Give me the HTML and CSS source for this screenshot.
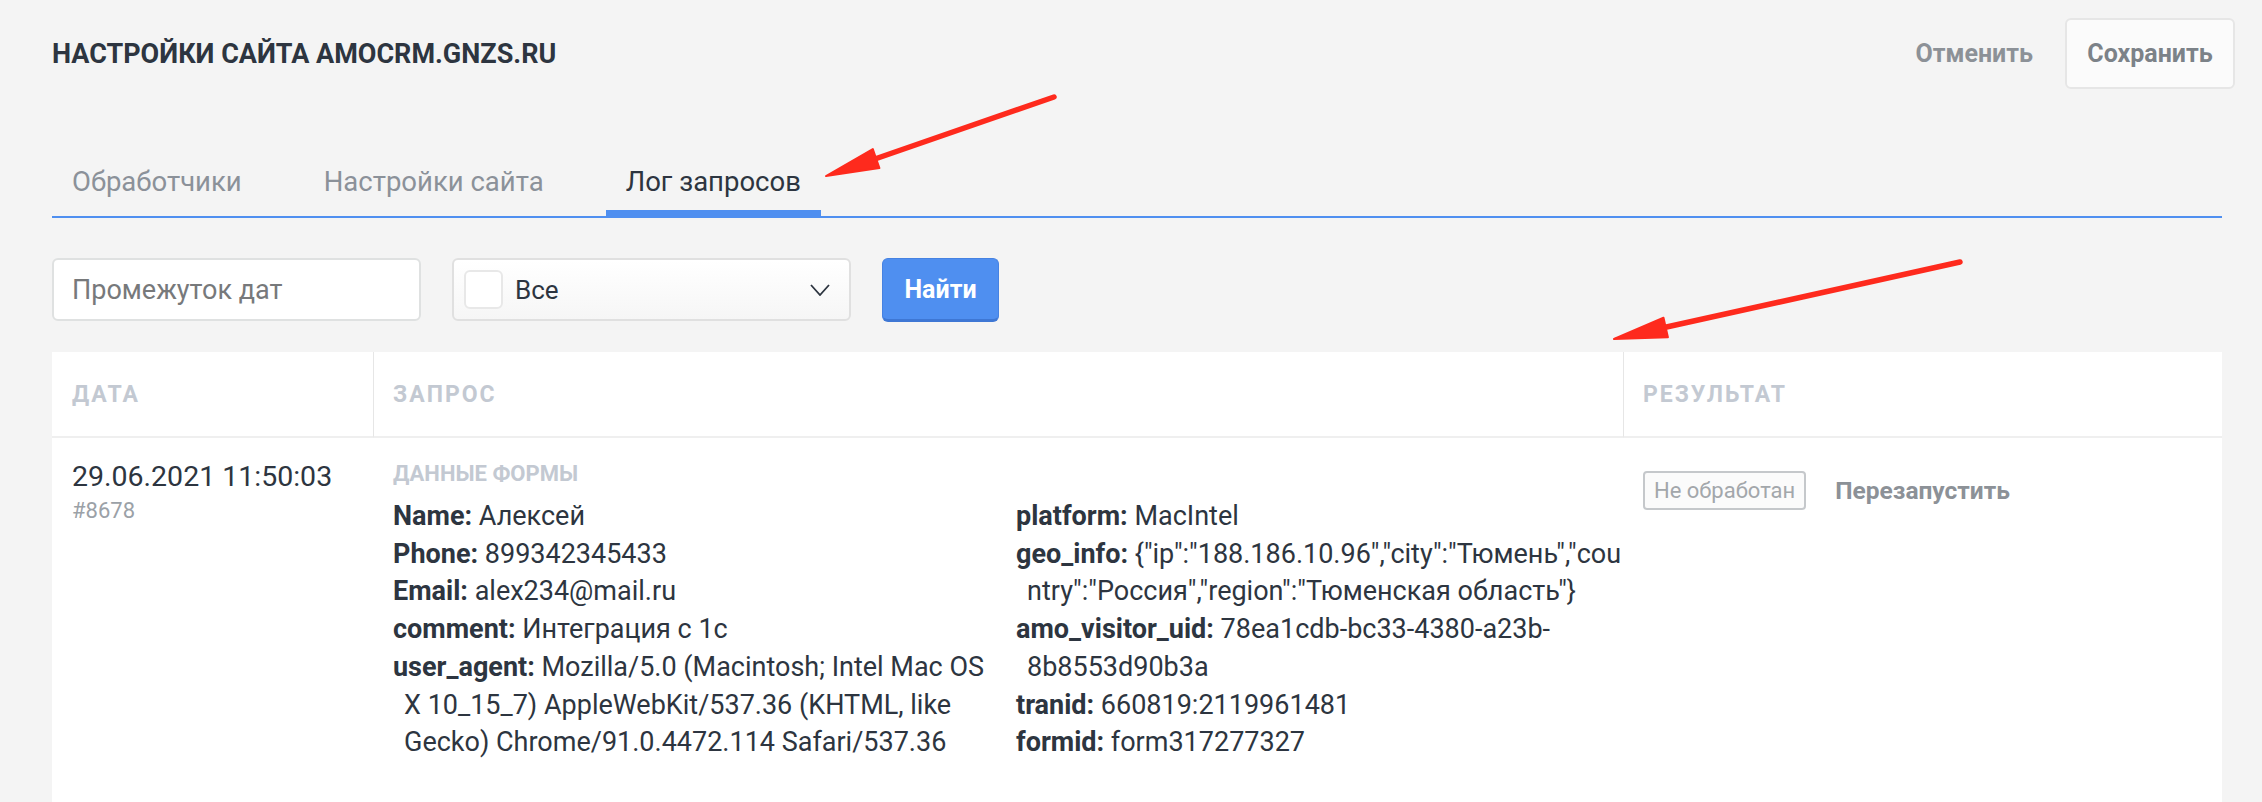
FILE: index.html
```html
<!DOCTYPE html>
<html lang="ru">
<head>
<meta charset="utf-8">
<title>Настройки сайта amocrm.gnzs.ru</title>
<link rel="stylesheet" href="styles.css">
</head>
<body>
<div class="page">
  <header class="topbar">
    <h1 class="title">НАСТРОЙКИ САЙТА AMOCRM.GNZS.RU</h1>
    <div class="actions">
      <button class="btn-link" type="button">Отменить</button>
      <button class="btn-save" type="button">Сохранить</button>
    </div>
  </header>

  <nav class="tabs">
    <a class="tab">Обработчики</a>
    <a class="tab">Настройки сайта</a>
    <a class="tab active">Лог запросов</a>
  </nav>

  <div class="filters">
    <input class="date-input" type="text" placeholder="Промежуток дат">
    <div class="select">
      <span class="check"></span>
      <span class="select-value">Все</span>
      <svg class="chevron" width="20" height="12" viewBox="0 0 20 12"><polyline points="1,1 10,11 19,1" fill="none" stroke="#2d3540" stroke-width="1.8"/></svg>
    </div>
    <button class="btn-find" type="button">Найти</button>
  </div>

  <div class="table">
    <div class="th">Дата</div>
    <div class="th divided">Запрос</div>
    <div class="th divided">Результат</div>

    <div class="td">
      <div class="date">29.06.2021 11:50:03</div>
      <div class="rid">#8678</div>
    </div>
    <div class="td">
      <div class="section-label">ДАННЫЕ ФОРМЫ</div>
      <div class="kv-grid">
        <div class="kv-col">
          <div class="kv"><b>Name:</b> Алексей</div>
          <div class="kv"><b>Phone:</b> 899342345433</div>
          <div class="kv"><b>Email:</b> alex234@mail.ru</div>
          <div class="kv"><b>comment:</b> Интеграция с 1с</div>
          <div class="kv"><b>user_agent:</b> Mozilla/5.0 (Macintosh; Intel Mac OS<br>X 10_15_7) AppleWebKit/537.36 (KHTML, like<br>Gecko) Chrome/91.0.4472.114 Safari/537.36</div>
        </div>
        <div class="kv-col">
          <div class="kv"><b>platform:</b> MacIntel</div>
          <div class="kv"><b>geo_info:</b> {"ip":"188.186.10.96","city":"Тюмень","cou<br>ntry":"Россия","region":"Тюменская область"}</div>
          <div class="kv"><b>amo_visitor_uid:</b> 78ea1cdb-bc33-4380-a23b-<br>8b8553d90b3a</div>
          <div class="kv"><b>tranid:</b> 660819:2119961481</div>
          <div class="kv"><b>formid:</b> form317277327</div>
        </div>
      </div>
    </div>
    <div class="td">
      <div class="result">
        <span class="badge">Не обработан</span>
        <a class="restart">Перезапустить</a>
      </div>
    </div>
  </div>
</div>

<svg class="annotations" width="2262" height="802" viewBox="0 0 2262 802">
  <g fill="#fe2a1d" stroke="#fe2a1d" stroke-linecap="round" stroke-linejoin="round">
    <line x1="1054" y1="97" x2="872" y2="160" stroke-width="5.5"/>
    <polygon points="826,176 879.4,168.1 872.8,149.1" stroke-width="2"/>
    <line x1="1960" y1="262" x2="1662" y2="328" stroke-width="5.5"/>
    <polygon points="1614,339 1667.9,337.3 1663.5,317.7" stroke-width="2"/>
  </g>
</svg>
</body>
</html>
```

FILE: styles.css
```css
html {
  overflow: hidden;
}

body {
  margin: 0;
  background: #f4f4f4;
  font-family: Roboto, "Noto Sans", sans-serif;
  color: #2d3540;
}

.page {
  padding: 0 40px 0 52px;
}

/* Header */
.topbar {
  display: flex;
  justify-content: space-between;
  align-items: center;
  padding-top: 18px;
  margin-right: -13px;
}

.title {
  margin: 0;
  font-size: 27px;
  font-weight: 700;
  color: #2d3540;
}

.actions {
  display: flex;
  align-items: center;
  gap: 32px;
}

.btn-link {
  background: none;
  border: 0;
  padding: 0;
  font-family: Roboto, sans-serif;
  font-weight: 700;
  font-size: 25px;
  color: #8c9197;
}

.btn-save {
  width: 170px;
  height: 71px;
  border: 2px solid #e6e6e6;
  border-radius: 6px;
  background: #fbfbfb;
  font-family: Roboto, sans-serif;
  font-weight: 700;
  font-size: 25px;
  color: #7c8288;
}

/* Tabs */
.tabs {
  display: flex;
  gap: 42px;
  margin-top: 75px;
  border-bottom: 2px solid #4f8ff0;
}

.tab {
  position: relative;
  padding: 0 20px 16px;
  font-size: 27.5px;
  line-height: 36px;
  color: #8b9199;
}

.tab.active {
  color: #2d3540;
}

.tab.active::after {
  content: "";
  position: absolute;
  left: 0;
  right: 0;
  bottom: 0;
  height: 6px;
  background: #4f8ff0;
}

/* Filters */
.filters {
  display: flex;
  gap: 31px;
  margin-top: 40px;
}

.date-input {
  box-sizing: border-box;
  width: 369px;
  height: 63px;
  border: 2px solid #dfe1e1;
  border-radius: 6px;
  background: #fff;
  padding: 0 18px;
  font-family: Roboto, sans-serif;
  font-size: 27px;
  color: #2d3540;
  outline: none;
}

.date-input::placeholder {
  color: #77797b;
}

.select {
  box-sizing: border-box;
  width: 399px;
  height: 63px;
  border: 2px solid #e0e0e0;
  border-radius: 6px;
  background: linear-gradient(#ffffff, #f6f6f6);
  display: flex;
  align-items: center;
  gap: 12px;
  padding: 0 19px 0 10px;
}

.check {
  box-sizing: border-box;
  width: 39px;
  height: 39px;
  border: 2px solid #e8e8e8;
  border-radius: 6px;
  background: #fff;
}

.select-value {
  flex: 1;
  font-size: 26px;
  color: #2d3540;
}

.chevron {
  display: block;
}

.btn-find {
  box-sizing: border-box;
  width: 117px;
  height: 64px;
  border: 1px solid #4682e2;
  border-bottom: 3px solid #3e77d4;
  border-radius: 6px;
  background: #4f8ff0;
  color: #fff;
  font-family: Roboto, sans-serif;
  font-weight: 700;
  font-size: 25px;
}

/* Table */
.table {
  margin-top: 30px;
  background: #fff;
  display: grid;
  grid-template-columns: 321px 1250px 1fr;
}

.th {
  box-sizing: border-box;
  height: 86px;
  border-bottom: 2px solid #efefef;
  padding: 0 20px;
  display: flex;
  align-items: center;
  font-weight: 700;
  font-size: 23px;
  letter-spacing: 2px;
  text-transform: uppercase;
  color: #c3c9d2;
}

.th.divided {
  border-left: 1px solid #e6e6e6;
  padding-left: 19px;
}

.td {
  box-sizing: border-box;
  min-height: 370px;
  padding: 20px 20px 0;
}

.date {
  font-size: 28.5px;
  line-height: 37px;
}

.rid {
  font-size: 22px;
  line-height: 32px;
  color: #9ba1a7;
}

.section-label {
  font-weight: 700;
  font-size: 22px;
  line-height: 31px;
  color: #c3c9d2;
  margin-bottom: 9px;
}

.kv-grid {
  display: grid;
  grid-template-columns: 623px 1fr;
}

.kv {
  font-size: 27px;
  line-height: 37.7px;
  padding-left: 11px;
  text-indent: -11px;
  white-space: nowrap;
}

.kv b {
  font-weight: 700;
}

.result {
  display: flex;
  align-items: center;
  gap: 29px;
  padding-top: 13px;
}

.badge {
  box-sizing: border-box;
  height: 39px;
  line-height: 35px;
  padding: 0 9px;
  border: 2px solid #c5c8cb;
  border-radius: 4px;
  background: #fbfbfb;
  font-size: 22px;
  color: #a3a7ab;
}

.restart {
  font-weight: 700;
  font-size: 24.5px;
  color: #8c9197;
}

/* Annotation arrows drawn over the screenshot */
.annotations {
  position: absolute;
  top: 0;
  left: 0;
  pointer-events: none;
}
```
